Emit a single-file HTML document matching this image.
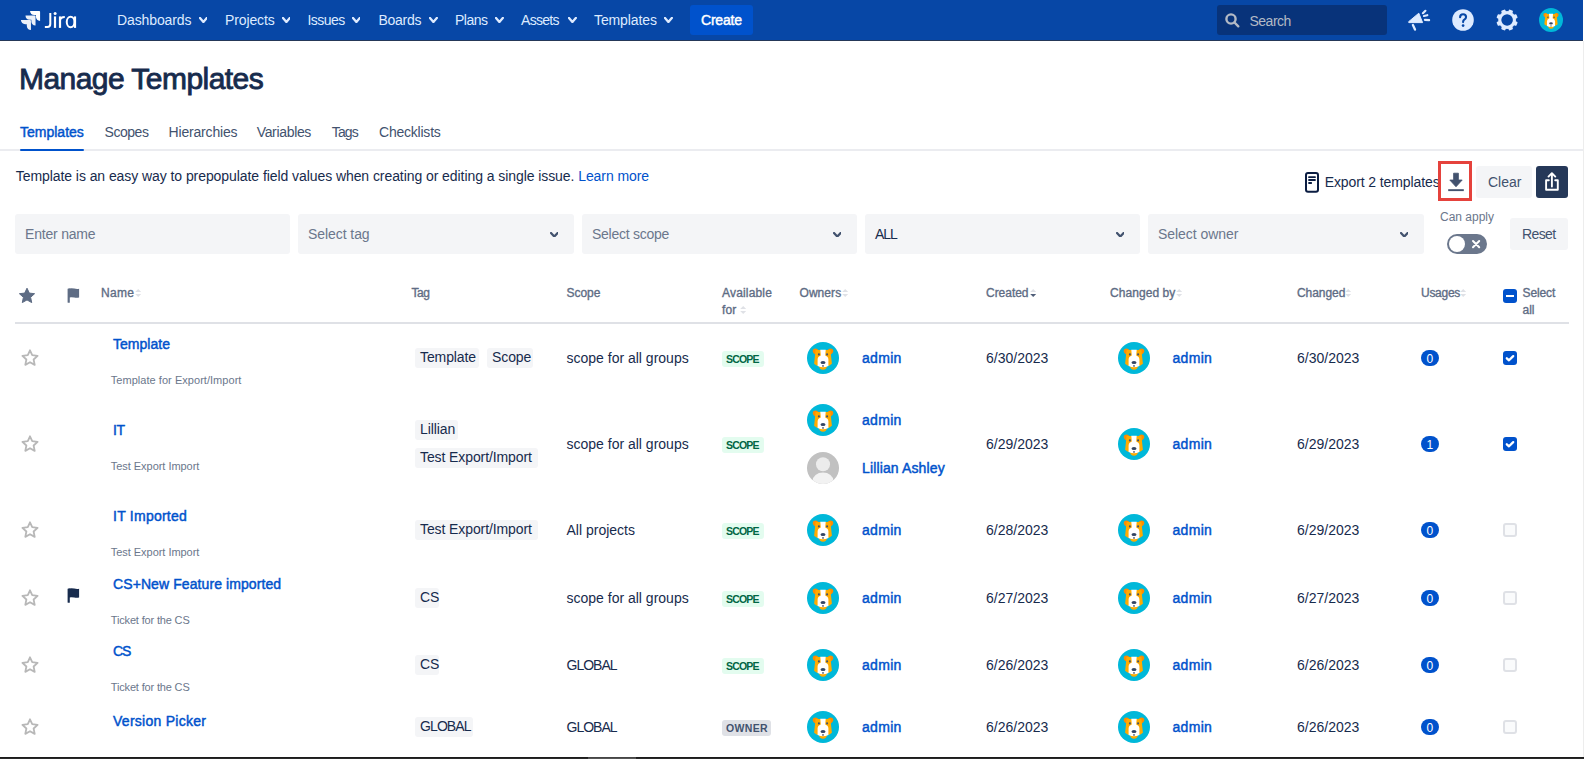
<!DOCTYPE html>
<html><head><meta charset="utf-8"><title>Manage Templates</title>
<style>
html,body{margin:0;padding:0;background:#fff;width:1584px;height:759px;overflow:hidden;position:relative}
body{font-family:"Liberation Sans",sans-serif;}
.t{position:absolute;white-space:nowrap;font-family:"Liberation Sans",sans-serif}
.r{position:absolute;display:block}
</style></head><body>
<div class="r" style="left:0px;top:0px;width:1583px;height:40px;background:#0747a6;"></div>
<div class="r" style="left:0px;top:40px;width:1583px;height:1px;background:#253858;"></div>
<svg class="r" style="left:19px;top:9px;" width="23" height="23" viewBox="0 0 24 24"><path fill="#fff" d="M11.53 2c0 2.4 1.97 4.35 4.35 4.35h1.78v1.7c0 2.4 1.94 4.34 4.34 4.35V2.84a.84.84 0 0 0-.84-.84H11.53z"/><path fill="#fff" opacity="0.92" d="M6.77 6.8a4.362 4.362 0 0 0 4.34 4.34h1.8v1.72a4.362 4.362 0 0 0 4.34 4.34V7.63a.841.841 0 0 0-.83-.83H6.77z"/><path fill="#fff" opacity="0.92" d="M2 11.6c0 2.4 1.95 4.34 4.35 4.34h1.78v1.72c.01 2.39 1.95 4.34 4.34 4.34v-9.57a.84.84 0 0 0-.84-.84L2 11.6z"/></svg>
<svg class="r" style="left:42px;top:8px;" width="38" height="24" viewBox="0 0 38 24"><g fill="none" stroke="#fff"><path d="M8.3 4.9 V15.9 Q8.3 18.95 5.3 18.95 H2.85" stroke-width="2"/><path d="M13 8.4 V19.9" stroke-width="2.2"/><path d="M18 8.4 V19.9" stroke-width="2.2"/><path d="M18 12.6 Q18.3 9.05 22.8 9.05" stroke-width="1.9"/><ellipse cx="28.6" cy="14.05" rx="3.85" ry="5.2" stroke-width="2"/><path d="M33 8.4 V19.9" stroke-width="2.2"/></g><circle cx="13.1" cy="5.5" r="1.5" fill="#fff"/></svg>
<div class="t" style="left:117px;top:13px;font-size:14px;line-height:14px;font-weight:400;color:#deebff;letter-spacing:-0.11px">Dashboards</div>
<svg class="r" style="left:198.5px;top:17px;" width="8.8" height="6" viewBox="0 0 8.8 6"><path d="M1 1 L4.4 5 L7.800000000000001 1" fill="none" stroke="#deebff" stroke-width="2.3" stroke-linecap="round" stroke-linejoin="round"/></svg>
<div class="t" style="left:225px;top:13px;font-size:14px;line-height:14px;font-weight:400;color:#deebff;letter-spacing:-0.13px">Projects</div>
<svg class="r" style="left:281.5px;top:17px;" width="8.8" height="6" viewBox="0 0 8.8 6"><path d="M1 1 L4.4 5 L7.800000000000001 1" fill="none" stroke="#deebff" stroke-width="2.3" stroke-linecap="round" stroke-linejoin="round"/></svg>
<div class="t" style="left:307.5px;top:13px;font-size:14px;line-height:14px;font-weight:400;color:#deebff;letter-spacing:-0.55px">Issues</div>
<svg class="r" style="left:351.5px;top:17px;" width="8.8" height="6" viewBox="0 0 8.8 6"><path d="M1 1 L4.4 5 L7.800000000000001 1" fill="none" stroke="#deebff" stroke-width="2.3" stroke-linecap="round" stroke-linejoin="round"/></svg>
<div class="t" style="left:378.5px;top:13px;font-size:14px;line-height:14px;font-weight:400;color:#deebff;letter-spacing:-0.28px">Boards</div>
<svg class="r" style="left:429px;top:17px;" width="8.8" height="6" viewBox="0 0 8.8 6"><path d="M1 1 L4.4 5 L7.800000000000001 1" fill="none" stroke="#deebff" stroke-width="2.3" stroke-linecap="round" stroke-linejoin="round"/></svg>
<div class="t" style="left:455px;top:13px;font-size:14px;line-height:14px;font-weight:400;color:#deebff;letter-spacing:-0.5px">Plans</div>
<svg class="r" style="left:495px;top:17px;" width="8.8" height="6" viewBox="0 0 8.8 6"><path d="M1 1 L4.4 5 L7.800000000000001 1" fill="none" stroke="#deebff" stroke-width="2.3" stroke-linecap="round" stroke-linejoin="round"/></svg>
<div class="t" style="left:521px;top:13px;font-size:14px;line-height:14px;font-weight:400;color:#deebff;letter-spacing:-0.7px">Assets</div>
<svg class="r" style="left:568px;top:17px;" width="8.8" height="6" viewBox="0 0 8.8 6"><path d="M1 1 L4.4 5 L7.800000000000001 1" fill="none" stroke="#deebff" stroke-width="2.3" stroke-linecap="round" stroke-linejoin="round"/></svg>
<div class="t" style="left:594px;top:13px;font-size:14px;line-height:14px;font-weight:400;color:#deebff;letter-spacing:-0.11px">Templates</div>
<svg class="r" style="left:664px;top:17px;" width="8.8" height="6" viewBox="0 0 8.8 6"><path d="M1 1 L4.4 5 L7.800000000000001 1" fill="none" stroke="#deebff" stroke-width="2.3" stroke-linecap="round" stroke-linejoin="round"/></svg>
<div class="r" style="left:690px;top:5px;width:63px;height:30px;background:#0052cc;border-radius:3px"></div>
<div class="t" style="left:701px;top:13px;font-size:14px;line-height:14px;font-weight:400;color:#ffffff;-webkit-text-stroke:0.45px #ffffff;letter-spacing:-0.2px">Create</div>
<div class="r" style="left:1217px;top:5px;width:170px;height:30px;background:#08337a;border-radius:3px"></div>
<svg class="r" style="left:1225px;top:13px;" width="15" height="15" viewBox="0 0 15 15"><circle cx="6" cy="6" r="4.6" fill="none" stroke="#b3bac5" stroke-width="2.4"/><path d="M9.5 9.5 L13.3 13.3" stroke="#b3bac5" stroke-width="2.4" stroke-linecap="round"/></svg>
<div class="t" style="left:1249.5px;top:14px;font-size:14px;line-height:14px;font-weight:400;color:#b3bac5;letter-spacing:-0.5px">Search</div>
<svg class="r" style="left:1406px;top:8px;" width="26" height="24" viewBox="0 0 26 24"><path d="M2.4 13.9 L12.8 5.2 L16.6 14.6 L2.9 14.6 Z" fill="#deebff" stroke="#deebff" stroke-width="1" stroke-linejoin="round"/><path d="M6.9 17 L9 21.6" stroke="#deebff" stroke-width="2.3" stroke-linecap="round"/><path d="M16.9 5.2 L19.4 2.8" stroke="#deebff" stroke-width="2.2" stroke-linecap="round"/><path d="M18 8 L21.3 7.2" stroke="#deebff" stroke-width="2.2" stroke-linecap="round"/><path d="M18.9 11.8 L23.1 12.2" stroke="#deebff" stroke-width="2.2" stroke-linecap="round"/></svg>
<svg class="r" style="left:1452px;top:9px;" width="22" height="22" viewBox="0 0 22 22"><circle cx="11" cy="11" r="10.8" fill="#deebff"/><path d="M8.1 8.3 Q8.1 5.2 11.1 5.2 Q14.05 5.2 14.05 8 Q14.05 9.7 12.3 10.7 Q11.1 11.4 11.1 13.1" fill="none" stroke="#0747a6" stroke-width="2.1" stroke-linecap="round"/><circle cx="11.1" cy="16.6" r="1.35" fill="#0747a6"/></svg>
<svg class="r" style="left:1496px;top:9px;" width="22" height="22" viewBox="0 0 22 22"><circle cx="11.1" cy="11" r="7.35" fill="none" stroke="#deebff" stroke-width="3.1"/><rect x="8.9" y="0.3" width="4.4" height="4.6" rx="1" fill="#deebff" transform="rotate(22.5 11.1 11)"/><rect x="8.9" y="0.3" width="4.4" height="4.6" rx="1" fill="#deebff" transform="rotate(67.5 11.1 11)"/><rect x="8.9" y="0.3" width="4.4" height="4.6" rx="1" fill="#deebff" transform="rotate(112.5 11.1 11)"/><rect x="8.9" y="0.3" width="4.4" height="4.6" rx="1" fill="#deebff" transform="rotate(157.5 11.1 11)"/><rect x="8.9" y="0.3" width="4.4" height="4.6" rx="1" fill="#deebff" transform="rotate(202.5 11.1 11)"/><rect x="8.9" y="0.3" width="4.4" height="4.6" rx="1" fill="#deebff" transform="rotate(247.5 11.1 11)"/><rect x="8.9" y="0.3" width="4.4" height="4.6" rx="1" fill="#deebff" transform="rotate(292.5 11.1 11)"/><rect x="8.9" y="0.3" width="4.4" height="4.6" rx="1" fill="#deebff" transform="rotate(337.5 11.1 11)"/></svg>
<svg class="r" style="left:1539px;top:8px;" width="24" height="24" viewBox="0 0 32 32"><circle cx="16" cy="16" r="16" fill="#00b8d9"/><path d="M5.8 9.3 Q5.6 6.6 8.6 6.6 Q10.6 6.8 11.4 8.2 L9.4 12.6 Q6.2 12.2 5.8 9.3Z" fill="#ff8b00"/><path d="M26.2 9.3 Q26.4 6.6 23.4 6.6 Q21.4 6.8 20.6 8.2 L22.6 12.6 Q25.8 12.2 26.2 9.3Z" fill="#ff8b00"/><path d="M8.6 8 L23.4 8 L24.9 21.8 Q22.5 23.9 19.9 24.3 Q19.6 27.6 16 27.8 Q12.4 27.6 12.1 24.3 Q9.5 23.9 7.1 21.8 Z" fill="#ffab00"/><path d="M13.3 7.7 L18.7 7.7 L18.2 13.5 Q21.4 14.6 21.4 17.5 L21.4 23.9 Q18.6 25.2 16 25.2 Q13.4 25.2 10.6 23.9 L10.6 17.5 Q10.6 14.6 13.8 13.5 Z" fill="#fff"/><circle cx="11.9" cy="12.4" r="1.05" fill="#42526e"/><circle cx="20.1" cy="12.4" r="1.05" fill="#42526e"/><ellipse cx="16" cy="20.6" rx="2.5" ry="1.5" fill="#344563"/><rect x="15" y="23.4" width="2" height="1.1" fill="#344563"/></svg>
<div class="t" style="left:19px;top:64px;font-size:30px;line-height:30px;font-weight:400;color:#172b4d;-webkit-text-stroke:0.85px #172b4d;letter-spacing:-0.55px">Manage Templates</div>
<div class="r" style="left:0px;top:149px;width:1583px;height:2px;background:#ebecf0;"></div>
<div class="t" style="left:20px;top:125px;font-size:14px;line-height:14px;font-weight:400;color:#0052cc;-webkit-text-stroke:0.45px #0052cc;letter-spacing:0px">Templates</div>
<div class="r" style="left:20px;top:149px;width:64px;height:2px;background:#0052cc;border-radius:1px"></div>
<div class="t" style="left:104.6px;top:125px;font-size:14px;line-height:14px;font-weight:400;color:#42526e;letter-spacing:-0.48px">Scopes</div>
<div class="t" style="left:168.5px;top:125px;font-size:14px;line-height:14px;font-weight:400;color:#42526e;letter-spacing:-0.17px">Hierarchies</div>
<div class="t" style="left:256.7px;top:125px;font-size:14px;line-height:14px;font-weight:400;color:#42526e;letter-spacing:-0.33px">Variables</div>
<div class="t" style="left:331.7px;top:125px;font-size:14px;line-height:14px;font-weight:400;color:#42526e;letter-spacing:-0.8px">Tags</div>
<div class="t" style="left:379px;top:125px;font-size:14px;line-height:14px;font-weight:400;color:#42526e;letter-spacing:-0.22px">Checklists</div>
<div class="t" style="left:15.8px;top:169px;font-size:14px;line-height:14px;font-weight:400;color:#172b4d;letter-spacing:-0.07px">Template is an easy way to prepopulate field values when creating or editing a single issue. <span style="color:#0052cc">Learn more</span></div>
<svg class="r" style="left:1304px;top:171px;" width="16" height="22" viewBox="0 0 16 22"><rect x="2" y="2" width="12" height="18.8" rx="2" fill="none" stroke="#0b1d42" stroke-width="2"/><rect x="4.2" y="5.2" width="7.6" height="1.8" rx="0.6" fill="#0b1d42"/><rect x="4.2" y="8.1" width="7.6" height="1.8" rx="0.6" fill="#0b1d42"/><rect x="4.2" y="11.1" width="3.8" height="1.8" rx="0.6" fill="#0b1d42"/></svg>
<div class="t" style="left:1324.7px;top:175px;font-size:14px;line-height:14px;font-weight:400;color:#172b4d;letter-spacing:-0.1px">Export 2 templates</div>
<div class="r" style="left:1438px;top:161px;width:28px;height:34px;border:3px solid #e5423c;"></div>
<svg class="r" style="left:1446px;top:171px;" width="20" height="22" viewBox="0 0 20 22"><path d="M7.6 2.2 L12.4 2.2 L12.4 9 L16.2 9 L10 15.8 L3.8 9 L7.6 9 Z" fill="#42526e" stroke="#42526e" stroke-width="0.8" stroke-linejoin="round"/><rect x="2.2" y="18.2" width="15.6" height="1.9" fill="#42526e"/></svg>
<div class="r" style="left:1476px;top:166px;width:56px;height:32px;background:#f4f5f7;border-radius:3px"></div>
<div class="t" style="left:1488px;top:175px;font-size:14px;line-height:14px;font-weight:400;color:#42526e;">Clear</div>
<div class="r" style="left:1536px;top:166px;width:32px;height:32px;background:#253858;border-radius:3px"></div>
<svg class="r" style="left:1541px;top:171px;" width="22" height="22" viewBox="0 0 22 22"><path d="M7.5 5.6 L10.9 2.2 L14.3 5.6 M10.9 2.6 L10.9 15.6" fill="none" stroke="#fff" stroke-width="1.9" stroke-linecap="round" stroke-linejoin="round"/><path d="M7.8 9.3 L5.1 9.3 L5.1 18.8 L16.8 18.8 L16.8 9.3 L14.2 9.3" fill="none" stroke="#fff" stroke-width="1.9" stroke-linejoin="round" stroke-linecap="round"/></svg>
<div class="r" style="left:15px;top:214px;width:275px;height:40px;background:#f4f5f7;border-radius:3px"></div>
<div class="t" style="left:25px;top:227px;font-size:14px;line-height:14px;font-weight:400;color:#6b778c;letter-spacing:-0.2px">Enter name</div>
<div class="r" style="left:298px;top:214px;width:276px;height:40px;background:#f4f5f7;border-radius:3px"></div>
<div class="t" style="left:308px;top:227px;font-size:14px;line-height:14px;font-weight:400;color:#6b778c;letter-spacing:-0.07px">Select tag</div>
<svg class="r" style="left:549.5px;top:231.5px;" width="8.6" height="5.6" viewBox="0 0 8.6 5.6"><path d="M1 1 L4.3 4.6 L7.6 1" fill="none" stroke="#42526e" stroke-width="2.2" stroke-linecap="round" stroke-linejoin="round"/></svg>
<div class="r" style="left:582px;top:214px;width:275px;height:40px;background:#f4f5f7;border-radius:3px"></div>
<div class="t" style="left:592px;top:227px;font-size:14px;line-height:14px;font-weight:400;color:#6b778c;letter-spacing:-0.25px">Select scope</div>
<svg class="r" style="left:832.5px;top:231.5px;" width="8.6" height="5.6" viewBox="0 0 8.6 5.6"><path d="M1 1 L4.3 4.6 L7.6 1" fill="none" stroke="#42526e" stroke-width="2.2" stroke-linecap="round" stroke-linejoin="round"/></svg>
<div class="r" style="left:865px;top:214px;width:275px;height:40px;background:#f4f5f7;border-radius:3px"></div>
<div class="t" style="left:875px;top:227px;font-size:14px;line-height:14px;font-weight:400;color:#172b4d;letter-spacing:-1px">ALL</div>
<svg class="r" style="left:1115.5px;top:231.5px;" width="8.6" height="5.6" viewBox="0 0 8.6 5.6"><path d="M1 1 L4.3 4.6 L7.6 1" fill="none" stroke="#42526e" stroke-width="2.2" stroke-linecap="round" stroke-linejoin="round"/></svg>
<div class="r" style="left:1148px;top:214px;width:276px;height:40px;background:#f4f5f7;border-radius:3px"></div>
<div class="t" style="left:1158px;top:227px;font-size:14px;line-height:14px;font-weight:400;color:#6b778c;letter-spacing:-0.05px">Select owner</div>
<svg class="r" style="left:1399.5px;top:231.5px;" width="8.6" height="5.6" viewBox="0 0 8.6 5.6"><path d="M1 1 L4.3 4.6 L7.6 1" fill="none" stroke="#42526e" stroke-width="2.2" stroke-linecap="round" stroke-linejoin="round"/></svg>
<div class="t" style="left:1440px;top:211px;font-size:12px;line-height:12px;font-weight:400;color:#6b778c;">Can apply</div>
<div class="r" style="left:1447px;top:234px;width:40px;height:20px;background:#6b778c;border-radius:10px"></div>
<div class="r" style="left:1449px;top:236px;width:16px;height:16px;border-radius:50%;background:#fff"></div>
<svg class="r" style="left:1470px;top:239px;" width="12" height="11" viewBox="0 0 12 11"><path d="M3 2 L9.2 8.2 M9.2 2 L3 8.2" stroke="#fff" stroke-width="2" stroke-linecap="round"/></svg>
<div class="r" style="left:1510px;top:218px;width:58px;height:32px;background:#f4f5f7;border-radius:3px"></div>
<div class="t" style="left:1522px;top:227px;font-size:14px;line-height:14px;font-weight:400;color:#42526e;letter-spacing:-0.6px">Reset</div>
<svg class="r" style="left:18px;top:287px;" width="18" height="18" viewBox="0 0 18 18"><path d="M9 1.2 L11.3 6.1 L16.6 6.7 L12.6 10.3 L13.7 15.6 L9 12.9 L4.3 15.6 L5.4 10.3 L1.4 6.7 L6.7 6.1 Z" fill="#5e6c84" stroke="#5e6c84" stroke-width="1" stroke-linejoin="round"/></svg>
<svg class="r" style="left:66px;top:287px;" width="16" height="18" viewBox="0 0 16 18"><rect x="1.6" y="1.5" width="2.2" height="14.3" rx="0.5" fill="#5e6c84"/><path d="M3 1.5 Q5.5 0.9 8.3 1.6 Q10.8 2.3 13.1 1.8 L13.1 10.4 Q10.8 11.2 8.3 10.6 Q5.5 9.9 3 10.5 Z" fill="#5e6c84"/></svg>
<div class="t" style="left:101px;top:287px;font-size:12px;line-height:12px;font-weight:400;color:#5e6c84;-webkit-text-stroke:0.35px #5e6c84;letter-spacing:0.27px">Name</div>
<svg class="r" style="left:134.8px;top:289px;" width="7" height="9" viewBox="0 0 7 9"><path d="M0.2 3 L3.2 0 L6.2 3 Z" fill="#dfe1e6"/><path d="M0.2 5 L3.2 8 L6.2 5 Z" fill="#dfe1e6"/></svg>
<div class="t" style="left:411.5px;top:287px;font-size:12px;line-height:12px;font-weight:400;color:#5e6c84;-webkit-text-stroke:0.35px #5e6c84;letter-spacing:-0.5px">Tag</div>
<div class="t" style="left:566.5px;top:287px;font-size:12px;line-height:12px;font-weight:400;color:#5e6c84;-webkit-text-stroke:0.35px #5e6c84;letter-spacing:-0.05px">Scope</div>
<div class="t" style="left:722px;top:287px;font-size:12px;line-height:12px;font-weight:400;color:#5e6c84;-webkit-text-stroke:0.35px #5e6c84;letter-spacing:0.17px">Available</div>
<div class="t" style="left:722px;top:304px;font-size:12px;line-height:12px;font-weight:400;color:#5e6c84;-webkit-text-stroke:0.35px #5e6c84;letter-spacing:0.1px">for</div>
<svg class="r" style="left:740px;top:306px;" width="7" height="9" viewBox="0 0 7 9"><path d="M0.2 3 L3.2 0 L6.2 3 Z" fill="#dfe1e6"/><path d="M0.2 5 L3.2 8 L6.2 5 Z" fill="#dfe1e6"/></svg>
<div class="t" style="left:799.5px;top:287px;font-size:12px;line-height:12px;font-weight:400;color:#5e6c84;-webkit-text-stroke:0.35px #5e6c84;letter-spacing:0.06px">Owners</div>
<svg class="r" style="left:842px;top:289px;" width="7" height="9" viewBox="0 0 7 9"><path d="M0.2 3 L3.2 0 L6.2 3 Z" fill="#dfe1e6"/><path d="M0.2 5 L3.2 8 L6.2 5 Z" fill="#dfe1e6"/></svg>
<div class="t" style="left:986px;top:287px;font-size:12px;line-height:12px;font-weight:400;color:#5e6c84;-webkit-text-stroke:0.35px #5e6c84;letter-spacing:-0.03px">Created</div>
<svg class="r" style="left:1029.8px;top:289px;" width="7" height="9" viewBox="0 0 7 9"><path d="M0.2 3 L3.2 0 L6.2 3 Z" fill="#dfe1e6"/><path d="M0.2 5 L3.2 8 L6.2 5 Z" fill="#505f79"/></svg>
<div class="t" style="left:1110px;top:287px;font-size:12px;line-height:12px;font-weight:400;color:#5e6c84;-webkit-text-stroke:0.35px #5e6c84;letter-spacing:0.06px">Changed by</div>
<svg class="r" style="left:1176px;top:289px;" width="7" height="9" viewBox="0 0 7 9"><path d="M0.2 3 L3.2 0 L6.2 3 Z" fill="#dfe1e6"/><path d="M0.2 5 L3.2 8 L6.2 5 Z" fill="#dfe1e6"/></svg>
<div class="t" style="left:1297px;top:287px;font-size:12px;line-height:12px;font-weight:400;color:#5e6c84;-webkit-text-stroke:0.35px #5e6c84;letter-spacing:-0.05px">Changed</div>
<svg class="r" style="left:1345px;top:289px;" width="7" height="9" viewBox="0 0 7 9"><path d="M0.2 3 L3.2 0 L6.2 3 Z" fill="#dfe1e6"/><path d="M0.2 5 L3.2 8 L6.2 5 Z" fill="#dfe1e6"/></svg>
<div class="t" style="left:1421px;top:287px;font-size:12px;line-height:12px;font-weight:400;color:#5e6c84;-webkit-text-stroke:0.35px #5e6c84;letter-spacing:-0.28px">Usages</div>
<svg class="r" style="left:1460px;top:289px;" width="7" height="9" viewBox="0 0 7 9"><path d="M0.2 3 L3.2 0 L6.2 3 Z" fill="#dfe1e6"/><path d="M0.2 5 L3.2 8 L6.2 5 Z" fill="#dfe1e6"/></svg>
<div class="r" style="left:1503px;top:289px;width:14px;height:14px;background:#0052cc;border-radius:3px"></div>
<div class="r" style="left:1506px;top:295px;width:8px;height:2px;background:#fff;"></div>
<div class="t" style="left:1522.5px;top:287px;font-size:12px;line-height:12px;font-weight:400;color:#5e6c84;-webkit-text-stroke:0.35px #5e6c84;letter-spacing:-0.12px">Select</div>
<div class="t" style="left:1522.5px;top:304px;font-size:12px;line-height:12px;font-weight:400;color:#5e6c84;-webkit-text-stroke:0.35px #5e6c84;letter-spacing:0px">all</div>
<div class="r" style="left:15px;top:322px;width:1554px;height:2px;background:#dfe1e6;"></div>
<svg class="r" style="left:21px;top:349px;" width="18" height="18" viewBox="0 0 18 18"><path d="M9 1.3 L11.2 6.2 L16.6 6.8 L12.6 10.5 L13.7 15.9 L9 13.2 L4.3 15.9 L5.4 10.5 L1.4 6.8 L6.8 6.2 Z" fill="none" stroke="#b8b8b8" stroke-width="1.8" stroke-linejoin="round"/></svg>
<div class="t" style="left:113px;top:337px;font-size:14px;line-height:14px;font-weight:400;color:#0052cc;-webkit-text-stroke:0.45px #0052cc;letter-spacing:0.03px">Template</div>
<div class="t" style="left:110.8px;top:375px;font-size:11px;line-height:11px;font-weight:400;color:#6b778c;letter-spacing:0.04px">Template for Export/Import</div>
<div class="r" style="left:415px;top:348px;width:64px;height:20px;background:#f4f5f7;border-radius:3px"></div>
<div class="t" style="left:420px;top:350px;font-size:14px;line-height:14px;font-weight:400;color:#172b4d;letter-spacing:-0.1px">Template</div>
<div class="r" style="left:487px;top:348px;width:46px;height:20px;background:#f4f5f7;border-radius:3px"></div>
<div class="t" style="left:492px;top:350px;font-size:14px;line-height:14px;font-weight:400;color:#172b4d;letter-spacing:-0.1px">Scope</div>
<div class="t" style="left:566.5px;top:351px;font-size:14px;line-height:14px;font-weight:400;color:#172b4d;">scope for all groups</div>
<div class="r" style="left:722px;top:351px;width:42px;height:16px;background:#e3fcef;border-radius:3px"></div>
<div class="t" style="left:726px;top:354px;font-size:10.5px;line-height:10.5px;font-weight:700;color:#006644;letter-spacing:-0.8px">SCOPE</div>
<svg class="r" style="left:807px;top:342px;" width="32" height="32" viewBox="0 0 32 32"><circle cx="16" cy="16" r="16" fill="#00b8d9"/><path d="M5.8 9.3 Q5.6 6.6 8.6 6.6 Q10.6 6.8 11.4 8.2 L9.4 12.6 Q6.2 12.2 5.8 9.3Z" fill="#ff8b00"/><path d="M26.2 9.3 Q26.4 6.6 23.4 6.6 Q21.4 6.8 20.6 8.2 L22.6 12.6 Q25.8 12.2 26.2 9.3Z" fill="#ff8b00"/><path d="M8.6 8 L23.4 8 L24.9 21.8 Q22.5 23.9 19.9 24.3 Q19.6 27.6 16 27.8 Q12.4 27.6 12.1 24.3 Q9.5 23.9 7.1 21.8 Z" fill="#ffab00"/><path d="M13.3 7.7 L18.7 7.7 L18.2 13.5 Q21.4 14.6 21.4 17.5 L21.4 23.9 Q18.6 25.2 16 25.2 Q13.4 25.2 10.6 23.9 L10.6 17.5 Q10.6 14.6 13.8 13.5 Z" fill="#fff"/><circle cx="11.9" cy="12.4" r="1.05" fill="#42526e"/><circle cx="20.1" cy="12.4" r="1.05" fill="#42526e"/><ellipse cx="16" cy="20.6" rx="2.5" ry="1.5" fill="#344563"/><rect x="15" y="23.4" width="2" height="1.1" fill="#344563"/></svg>
<div class="t" style="left:862px;top:351px;font-size:14px;line-height:14px;font-weight:400;color:#0052cc;-webkit-text-stroke:0.45px #0052cc;letter-spacing:0.3px">admin</div>
<div class="t" style="left:986px;top:351px;font-size:14px;line-height:14px;font-weight:400;color:#172b4d;letter-spacing:0px">6/30/2023</div>
<svg class="r" style="left:1118px;top:342px;" width="32" height="32" viewBox="0 0 32 32"><circle cx="16" cy="16" r="16" fill="#00b8d9"/><path d="M5.8 9.3 Q5.6 6.6 8.6 6.6 Q10.6 6.8 11.4 8.2 L9.4 12.6 Q6.2 12.2 5.8 9.3Z" fill="#ff8b00"/><path d="M26.2 9.3 Q26.4 6.6 23.4 6.6 Q21.4 6.8 20.6 8.2 L22.6 12.6 Q25.8 12.2 26.2 9.3Z" fill="#ff8b00"/><path d="M8.6 8 L23.4 8 L24.9 21.8 Q22.5 23.9 19.9 24.3 Q19.6 27.6 16 27.8 Q12.4 27.6 12.1 24.3 Q9.5 23.9 7.1 21.8 Z" fill="#ffab00"/><path d="M13.3 7.7 L18.7 7.7 L18.2 13.5 Q21.4 14.6 21.4 17.5 L21.4 23.9 Q18.6 25.2 16 25.2 Q13.4 25.2 10.6 23.9 L10.6 17.5 Q10.6 14.6 13.8 13.5 Z" fill="#fff"/><circle cx="11.9" cy="12.4" r="1.05" fill="#42526e"/><circle cx="20.1" cy="12.4" r="1.05" fill="#42526e"/><ellipse cx="16" cy="20.6" rx="2.5" ry="1.5" fill="#344563"/><rect x="15" y="23.4" width="2" height="1.1" fill="#344563"/></svg>
<div class="t" style="left:1172.5px;top:351px;font-size:14px;line-height:14px;font-weight:400;color:#0052cc;-webkit-text-stroke:0.45px #0052cc;letter-spacing:0.3px">admin</div>
<div class="t" style="left:1297px;top:351px;font-size:14px;line-height:14px;font-weight:400;color:#172b4d;letter-spacing:0px">6/30/2023</div>
<div class="r" style="left:1421px;top:350px;width:18px;height:16px;background:#0052cc;border-radius:8px"></div>
<div class="t" style="left:1426.5px;top:352.5px;font-size:12px;line-height:12px;font-weight:400;color:#fff;">0</div>
<div class="r" style="left:1503px;top:351px;width:14px;height:14px;background:#0052cc;border-radius:3px"></div>
<svg class="r" style="left:1503px;top:351px;" width="14" height="14" viewBox="0 0 14 14"><path d="M3.8 7.3 L6 9.3 L10.2 5.1" fill="none" stroke="#fff" stroke-width="2.3" stroke-linecap="round" stroke-linejoin="round"/></svg>
<svg class="r" style="left:21px;top:435px;" width="18" height="18" viewBox="0 0 18 18"><path d="M9 1.3 L11.2 6.2 L16.6 6.8 L12.6 10.5 L13.7 15.9 L9 13.2 L4.3 15.9 L5.4 10.5 L1.4 6.8 L6.8 6.2 Z" fill="none" stroke="#b8b8b8" stroke-width="1.8" stroke-linejoin="round"/></svg>
<div class="t" style="left:113px;top:423px;font-size:14px;line-height:14px;font-weight:400;color:#0052cc;-webkit-text-stroke:0.45px #0052cc;letter-spacing:-0.5px">IT</div>
<div class="t" style="left:110.8px;top:461px;font-size:11px;line-height:11px;font-weight:400;color:#6b778c;letter-spacing:-0.04px">Test Export Import</div>
<div class="r" style="left:415px;top:420px;width:43px;height:20px;background:#f4f5f7;border-radius:3px"></div>
<div class="t" style="left:420px;top:422px;font-size:14px;line-height:14px;font-weight:400;color:#172b4d;letter-spacing:-0.1px">Lillian</div>
<div class="r" style="left:415px;top:448px;width:123px;height:20px;background:#f4f5f7;border-radius:3px"></div>
<div class="t" style="left:420px;top:450px;font-size:14px;line-height:14px;font-weight:400;color:#172b4d;letter-spacing:-0.1px">Test Export/Import</div>
<div class="t" style="left:566.5px;top:437px;font-size:14px;line-height:14px;font-weight:400;color:#172b4d;">scope for all groups</div>
<div class="r" style="left:722px;top:437px;width:42px;height:16px;background:#e3fcef;border-radius:3px"></div>
<div class="t" style="left:726px;top:440px;font-size:10.5px;line-height:10.5px;font-weight:700;color:#006644;letter-spacing:-0.8px">SCOPE</div>
<svg class="r" style="left:807px;top:404px;" width="32" height="32" viewBox="0 0 32 32"><circle cx="16" cy="16" r="16" fill="#00b8d9"/><path d="M5.8 9.3 Q5.6 6.6 8.6 6.6 Q10.6 6.8 11.4 8.2 L9.4 12.6 Q6.2 12.2 5.8 9.3Z" fill="#ff8b00"/><path d="M26.2 9.3 Q26.4 6.6 23.4 6.6 Q21.4 6.8 20.6 8.2 L22.6 12.6 Q25.8 12.2 26.2 9.3Z" fill="#ff8b00"/><path d="M8.6 8 L23.4 8 L24.9 21.8 Q22.5 23.9 19.9 24.3 Q19.6 27.6 16 27.8 Q12.4 27.6 12.1 24.3 Q9.5 23.9 7.1 21.8 Z" fill="#ffab00"/><path d="M13.3 7.7 L18.7 7.7 L18.2 13.5 Q21.4 14.6 21.4 17.5 L21.4 23.9 Q18.6 25.2 16 25.2 Q13.4 25.2 10.6 23.9 L10.6 17.5 Q10.6 14.6 13.8 13.5 Z" fill="#fff"/><circle cx="11.9" cy="12.4" r="1.05" fill="#42526e"/><circle cx="20.1" cy="12.4" r="1.05" fill="#42526e"/><ellipse cx="16" cy="20.6" rx="2.5" ry="1.5" fill="#344563"/><rect x="15" y="23.4" width="2" height="1.1" fill="#344563"/></svg>
<div class="t" style="left:862px;top:413px;font-size:14px;line-height:14px;font-weight:400;color:#0052cc;-webkit-text-stroke:0.45px #0052cc;letter-spacing:0.3px">admin</div>
<svg class="r" style="left:807px;top:452px;" width="32" height="32" viewBox="0 0 32 32"><defs><clipPath id="pc"><circle cx="16" cy="16" r="16"/></clipPath></defs><circle cx="16" cy="16" r="16" fill="#c1c1c1"/><g clip-path="url(#pc)"><circle cx="16" cy="12.3" r="7" fill="#ececec"/><ellipse cx="16" cy="29" rx="10.5" ry="8.5" fill="#f2f2f2"/></g></svg>
<div class="t" style="left:862px;top:461px;font-size:14px;line-height:14px;font-weight:400;color:#0052cc;-webkit-text-stroke:0.45px #0052cc;letter-spacing:0.13px">Lillian Ashley</div>
<div class="t" style="left:986px;top:437px;font-size:14px;line-height:14px;font-weight:400;color:#172b4d;letter-spacing:0px">6/29/2023</div>
<svg class="r" style="left:1118px;top:428px;" width="32" height="32" viewBox="0 0 32 32"><circle cx="16" cy="16" r="16" fill="#00b8d9"/><path d="M5.8 9.3 Q5.6 6.6 8.6 6.6 Q10.6 6.8 11.4 8.2 L9.4 12.6 Q6.2 12.2 5.8 9.3Z" fill="#ff8b00"/><path d="M26.2 9.3 Q26.4 6.6 23.4 6.6 Q21.4 6.8 20.6 8.2 L22.6 12.6 Q25.8 12.2 26.2 9.3Z" fill="#ff8b00"/><path d="M8.6 8 L23.4 8 L24.9 21.8 Q22.5 23.9 19.9 24.3 Q19.6 27.6 16 27.8 Q12.4 27.6 12.1 24.3 Q9.5 23.9 7.1 21.8 Z" fill="#ffab00"/><path d="M13.3 7.7 L18.7 7.7 L18.2 13.5 Q21.4 14.6 21.4 17.5 L21.4 23.9 Q18.6 25.2 16 25.2 Q13.4 25.2 10.6 23.9 L10.6 17.5 Q10.6 14.6 13.8 13.5 Z" fill="#fff"/><circle cx="11.9" cy="12.4" r="1.05" fill="#42526e"/><circle cx="20.1" cy="12.4" r="1.05" fill="#42526e"/><ellipse cx="16" cy="20.6" rx="2.5" ry="1.5" fill="#344563"/><rect x="15" y="23.4" width="2" height="1.1" fill="#344563"/></svg>
<div class="t" style="left:1172.5px;top:437px;font-size:14px;line-height:14px;font-weight:400;color:#0052cc;-webkit-text-stroke:0.45px #0052cc;letter-spacing:0.3px">admin</div>
<div class="t" style="left:1297px;top:437px;font-size:14px;line-height:14px;font-weight:400;color:#172b4d;letter-spacing:0px">6/29/2023</div>
<div class="r" style="left:1421px;top:436px;width:18px;height:16px;background:#0052cc;border-radius:8px"></div>
<div class="t" style="left:1426.5px;top:438.5px;font-size:12px;line-height:12px;font-weight:400;color:#fff;">1</div>
<div class="r" style="left:1503px;top:437px;width:14px;height:14px;background:#0052cc;border-radius:3px"></div>
<svg class="r" style="left:1503px;top:437px;" width="14" height="14" viewBox="0 0 14 14"><path d="M3.8 7.3 L6 9.3 L10.2 5.1" fill="none" stroke="#fff" stroke-width="2.3" stroke-linecap="round" stroke-linejoin="round"/></svg>
<svg class="r" style="left:21px;top:521px;" width="18" height="18" viewBox="0 0 18 18"><path d="M9 1.3 L11.2 6.2 L16.6 6.8 L12.6 10.5 L13.7 15.9 L9 13.2 L4.3 15.9 L5.4 10.5 L1.4 6.8 L6.8 6.2 Z" fill="none" stroke="#b8b8b8" stroke-width="1.8" stroke-linejoin="round"/></svg>
<div class="t" style="left:113px;top:509px;font-size:14px;line-height:14px;font-weight:400;color:#0052cc;-webkit-text-stroke:0.45px #0052cc;letter-spacing:0.25px">IT Imported</div>
<div class="t" style="left:110.8px;top:547px;font-size:11px;line-height:11px;font-weight:400;color:#6b778c;letter-spacing:-0.04px">Test Export Import</div>
<div class="r" style="left:415px;top:520px;width:123px;height:20px;background:#f4f5f7;border-radius:3px"></div>
<div class="t" style="left:420px;top:522px;font-size:14px;line-height:14px;font-weight:400;color:#172b4d;letter-spacing:-0.1px">Test Export/Import</div>
<div class="t" style="left:566.5px;top:523px;font-size:14px;line-height:14px;font-weight:400;color:#172b4d;">All projects</div>
<div class="r" style="left:722px;top:523px;width:42px;height:16px;background:#e3fcef;border-radius:3px"></div>
<div class="t" style="left:726px;top:526px;font-size:10.5px;line-height:10.5px;font-weight:700;color:#006644;letter-spacing:-0.8px">SCOPE</div>
<svg class="r" style="left:807px;top:514px;" width="32" height="32" viewBox="0 0 32 32"><circle cx="16" cy="16" r="16" fill="#00b8d9"/><path d="M5.8 9.3 Q5.6 6.6 8.6 6.6 Q10.6 6.8 11.4 8.2 L9.4 12.6 Q6.2 12.2 5.8 9.3Z" fill="#ff8b00"/><path d="M26.2 9.3 Q26.4 6.6 23.4 6.6 Q21.4 6.8 20.6 8.2 L22.6 12.6 Q25.8 12.2 26.2 9.3Z" fill="#ff8b00"/><path d="M8.6 8 L23.4 8 L24.9 21.8 Q22.5 23.9 19.9 24.3 Q19.6 27.6 16 27.8 Q12.4 27.6 12.1 24.3 Q9.5 23.9 7.1 21.8 Z" fill="#ffab00"/><path d="M13.3 7.7 L18.7 7.7 L18.2 13.5 Q21.4 14.6 21.4 17.5 L21.4 23.9 Q18.6 25.2 16 25.2 Q13.4 25.2 10.6 23.9 L10.6 17.5 Q10.6 14.6 13.8 13.5 Z" fill="#fff"/><circle cx="11.9" cy="12.4" r="1.05" fill="#42526e"/><circle cx="20.1" cy="12.4" r="1.05" fill="#42526e"/><ellipse cx="16" cy="20.6" rx="2.5" ry="1.5" fill="#344563"/><rect x="15" y="23.4" width="2" height="1.1" fill="#344563"/></svg>
<div class="t" style="left:862px;top:523px;font-size:14px;line-height:14px;font-weight:400;color:#0052cc;-webkit-text-stroke:0.45px #0052cc;letter-spacing:0.3px">admin</div>
<div class="t" style="left:986px;top:523px;font-size:14px;line-height:14px;font-weight:400;color:#172b4d;letter-spacing:0px">6/28/2023</div>
<svg class="r" style="left:1118px;top:514px;" width="32" height="32" viewBox="0 0 32 32"><circle cx="16" cy="16" r="16" fill="#00b8d9"/><path d="M5.8 9.3 Q5.6 6.6 8.6 6.6 Q10.6 6.8 11.4 8.2 L9.4 12.6 Q6.2 12.2 5.8 9.3Z" fill="#ff8b00"/><path d="M26.2 9.3 Q26.4 6.6 23.4 6.6 Q21.4 6.8 20.6 8.2 L22.6 12.6 Q25.8 12.2 26.2 9.3Z" fill="#ff8b00"/><path d="M8.6 8 L23.4 8 L24.9 21.8 Q22.5 23.9 19.9 24.3 Q19.6 27.6 16 27.8 Q12.4 27.6 12.1 24.3 Q9.5 23.9 7.1 21.8 Z" fill="#ffab00"/><path d="M13.3 7.7 L18.7 7.7 L18.2 13.5 Q21.4 14.6 21.4 17.5 L21.4 23.9 Q18.6 25.2 16 25.2 Q13.4 25.2 10.6 23.9 L10.6 17.5 Q10.6 14.6 13.8 13.5 Z" fill="#fff"/><circle cx="11.9" cy="12.4" r="1.05" fill="#42526e"/><circle cx="20.1" cy="12.4" r="1.05" fill="#42526e"/><ellipse cx="16" cy="20.6" rx="2.5" ry="1.5" fill="#344563"/><rect x="15" y="23.4" width="2" height="1.1" fill="#344563"/></svg>
<div class="t" style="left:1172.5px;top:523px;font-size:14px;line-height:14px;font-weight:400;color:#0052cc;-webkit-text-stroke:0.45px #0052cc;letter-spacing:0.3px">admin</div>
<div class="t" style="left:1297px;top:523px;font-size:14px;line-height:14px;font-weight:400;color:#172b4d;letter-spacing:0px">6/29/2023</div>
<div class="r" style="left:1421px;top:522px;width:18px;height:16px;background:#0052cc;border-radius:8px"></div>
<div class="t" style="left:1426.5px;top:524.5px;font-size:12px;line-height:12px;font-weight:400;color:#fff;">0</div>
<div class="r" style="left:1503px;top:523px;width:10px;height:10px;border:2px solid #dfe1e6;border-radius:3px;background:#fafbfc"></div>
<svg class="r" style="left:21px;top:589px;" width="18" height="18" viewBox="0 0 18 18"><path d="M9 1.3 L11.2 6.2 L16.6 6.8 L12.6 10.5 L13.7 15.9 L9 13.2 L4.3 15.9 L5.4 10.5 L1.4 6.8 L6.8 6.2 Z" fill="none" stroke="#b8b8b8" stroke-width="1.8" stroke-linejoin="round"/></svg>
<svg class="r" style="left:66px;top:587px;" width="16" height="18" viewBox="0 0 16 18"><rect x="1.6" y="1.5" width="2.2" height="14.3" rx="0.5" fill="#172b4d"/><path d="M3 1.5 Q5.5 0.9 8.3 1.6 Q10.8 2.3 13.1 1.8 L13.1 10.4 Q10.8 11.2 8.3 10.6 Q5.5 9.9 3 10.5 Z" fill="#172b4d"/></svg>
<div class="t" style="left:113px;top:577px;font-size:14px;line-height:14px;font-weight:400;color:#0052cc;-webkit-text-stroke:0.45px #0052cc;letter-spacing:0.09px">CS+New Feature imported</div>
<div class="t" style="left:110.8px;top:615px;font-size:11px;line-height:11px;font-weight:400;color:#6b778c;letter-spacing:-0.16px">Ticket for the CS</div>
<div class="r" style="left:415px;top:588px;width:24px;height:20px;background:#f4f5f7;border-radius:3px"></div>
<div class="t" style="left:420px;top:590px;font-size:14px;line-height:14px;font-weight:400;color:#172b4d;letter-spacing:-0.1px">CS</div>
<div class="t" style="left:566.5px;top:591px;font-size:14px;line-height:14px;font-weight:400;color:#172b4d;">scope for all groups</div>
<div class="r" style="left:722px;top:591px;width:42px;height:16px;background:#e3fcef;border-radius:3px"></div>
<div class="t" style="left:726px;top:594px;font-size:10.5px;line-height:10.5px;font-weight:700;color:#006644;letter-spacing:-0.8px">SCOPE</div>
<svg class="r" style="left:807px;top:582px;" width="32" height="32" viewBox="0 0 32 32"><circle cx="16" cy="16" r="16" fill="#00b8d9"/><path d="M5.8 9.3 Q5.6 6.6 8.6 6.6 Q10.6 6.8 11.4 8.2 L9.4 12.6 Q6.2 12.2 5.8 9.3Z" fill="#ff8b00"/><path d="M26.2 9.3 Q26.4 6.6 23.4 6.6 Q21.4 6.8 20.6 8.2 L22.6 12.6 Q25.8 12.2 26.2 9.3Z" fill="#ff8b00"/><path d="M8.6 8 L23.4 8 L24.9 21.8 Q22.5 23.9 19.9 24.3 Q19.6 27.6 16 27.8 Q12.4 27.6 12.1 24.3 Q9.5 23.9 7.1 21.8 Z" fill="#ffab00"/><path d="M13.3 7.7 L18.7 7.7 L18.2 13.5 Q21.4 14.6 21.4 17.5 L21.4 23.9 Q18.6 25.2 16 25.2 Q13.4 25.2 10.6 23.9 L10.6 17.5 Q10.6 14.6 13.8 13.5 Z" fill="#fff"/><circle cx="11.9" cy="12.4" r="1.05" fill="#42526e"/><circle cx="20.1" cy="12.4" r="1.05" fill="#42526e"/><ellipse cx="16" cy="20.6" rx="2.5" ry="1.5" fill="#344563"/><rect x="15" y="23.4" width="2" height="1.1" fill="#344563"/></svg>
<div class="t" style="left:862px;top:591px;font-size:14px;line-height:14px;font-weight:400;color:#0052cc;-webkit-text-stroke:0.45px #0052cc;letter-spacing:0.3px">admin</div>
<div class="t" style="left:986px;top:591px;font-size:14px;line-height:14px;font-weight:400;color:#172b4d;letter-spacing:0px">6/27/2023</div>
<svg class="r" style="left:1118px;top:582px;" width="32" height="32" viewBox="0 0 32 32"><circle cx="16" cy="16" r="16" fill="#00b8d9"/><path d="M5.8 9.3 Q5.6 6.6 8.6 6.6 Q10.6 6.8 11.4 8.2 L9.4 12.6 Q6.2 12.2 5.8 9.3Z" fill="#ff8b00"/><path d="M26.2 9.3 Q26.4 6.6 23.4 6.6 Q21.4 6.8 20.6 8.2 L22.6 12.6 Q25.8 12.2 26.2 9.3Z" fill="#ff8b00"/><path d="M8.6 8 L23.4 8 L24.9 21.8 Q22.5 23.9 19.9 24.3 Q19.6 27.6 16 27.8 Q12.4 27.6 12.1 24.3 Q9.5 23.9 7.1 21.8 Z" fill="#ffab00"/><path d="M13.3 7.7 L18.7 7.7 L18.2 13.5 Q21.4 14.6 21.4 17.5 L21.4 23.9 Q18.6 25.2 16 25.2 Q13.4 25.2 10.6 23.9 L10.6 17.5 Q10.6 14.6 13.8 13.5 Z" fill="#fff"/><circle cx="11.9" cy="12.4" r="1.05" fill="#42526e"/><circle cx="20.1" cy="12.4" r="1.05" fill="#42526e"/><ellipse cx="16" cy="20.6" rx="2.5" ry="1.5" fill="#344563"/><rect x="15" y="23.4" width="2" height="1.1" fill="#344563"/></svg>
<div class="t" style="left:1172.5px;top:591px;font-size:14px;line-height:14px;font-weight:400;color:#0052cc;-webkit-text-stroke:0.45px #0052cc;letter-spacing:0.3px">admin</div>
<div class="t" style="left:1297px;top:591px;font-size:14px;line-height:14px;font-weight:400;color:#172b4d;letter-spacing:0px">6/27/2023</div>
<div class="r" style="left:1421px;top:590px;width:18px;height:16px;background:#0052cc;border-radius:8px"></div>
<div class="t" style="left:1426.5px;top:592.5px;font-size:12px;line-height:12px;font-weight:400;color:#fff;">0</div>
<div class="r" style="left:1503px;top:591px;width:10px;height:10px;border:2px solid #dfe1e6;border-radius:3px;background:#fafbfc"></div>
<svg class="r" style="left:21px;top:656px;" width="18" height="18" viewBox="0 0 18 18"><path d="M9 1.3 L11.2 6.2 L16.6 6.8 L12.6 10.5 L13.7 15.9 L9 13.2 L4.3 15.9 L5.4 10.5 L1.4 6.8 L6.8 6.2 Z" fill="none" stroke="#b8b8b8" stroke-width="1.8" stroke-linejoin="round"/></svg>
<div class="t" style="left:113px;top:644px;font-size:14px;line-height:14px;font-weight:400;color:#0052cc;-webkit-text-stroke:0.45px #0052cc;letter-spacing:-1.0px">CS</div>
<div class="t" style="left:110.8px;top:682px;font-size:11px;line-height:11px;font-weight:400;color:#6b778c;letter-spacing:-0.16px">Ticket for the CS</div>
<div class="r" style="left:415px;top:655px;width:24px;height:20px;background:#f4f5f7;border-radius:3px"></div>
<div class="t" style="left:420px;top:657px;font-size:14px;line-height:14px;font-weight:400;color:#172b4d;letter-spacing:-0.1px">CS</div>
<div class="t" style="left:566.5px;top:658px;font-size:14px;line-height:14px;font-weight:400;color:#172b4d;letter-spacing:-1px">GLOBAL</div>
<div class="r" style="left:722px;top:658px;width:42px;height:16px;background:#e3fcef;border-radius:3px"></div>
<div class="t" style="left:726px;top:661px;font-size:10.5px;line-height:10.5px;font-weight:700;color:#006644;letter-spacing:-0.8px">SCOPE</div>
<svg class="r" style="left:807px;top:649px;" width="32" height="32" viewBox="0 0 32 32"><circle cx="16" cy="16" r="16" fill="#00b8d9"/><path d="M5.8 9.3 Q5.6 6.6 8.6 6.6 Q10.6 6.8 11.4 8.2 L9.4 12.6 Q6.2 12.2 5.8 9.3Z" fill="#ff8b00"/><path d="M26.2 9.3 Q26.4 6.6 23.4 6.6 Q21.4 6.8 20.6 8.2 L22.6 12.6 Q25.8 12.2 26.2 9.3Z" fill="#ff8b00"/><path d="M8.6 8 L23.4 8 L24.9 21.8 Q22.5 23.9 19.9 24.3 Q19.6 27.6 16 27.8 Q12.4 27.6 12.1 24.3 Q9.5 23.9 7.1 21.8 Z" fill="#ffab00"/><path d="M13.3 7.7 L18.7 7.7 L18.2 13.5 Q21.4 14.6 21.4 17.5 L21.4 23.9 Q18.6 25.2 16 25.2 Q13.4 25.2 10.6 23.9 L10.6 17.5 Q10.6 14.6 13.8 13.5 Z" fill="#fff"/><circle cx="11.9" cy="12.4" r="1.05" fill="#42526e"/><circle cx="20.1" cy="12.4" r="1.05" fill="#42526e"/><ellipse cx="16" cy="20.6" rx="2.5" ry="1.5" fill="#344563"/><rect x="15" y="23.4" width="2" height="1.1" fill="#344563"/></svg>
<div class="t" style="left:862px;top:658px;font-size:14px;line-height:14px;font-weight:400;color:#0052cc;-webkit-text-stroke:0.45px #0052cc;letter-spacing:0.3px">admin</div>
<div class="t" style="left:986px;top:658px;font-size:14px;line-height:14px;font-weight:400;color:#172b4d;letter-spacing:0px">6/26/2023</div>
<svg class="r" style="left:1118px;top:649px;" width="32" height="32" viewBox="0 0 32 32"><circle cx="16" cy="16" r="16" fill="#00b8d9"/><path d="M5.8 9.3 Q5.6 6.6 8.6 6.6 Q10.6 6.8 11.4 8.2 L9.4 12.6 Q6.2 12.2 5.8 9.3Z" fill="#ff8b00"/><path d="M26.2 9.3 Q26.4 6.6 23.4 6.6 Q21.4 6.8 20.6 8.2 L22.6 12.6 Q25.8 12.2 26.2 9.3Z" fill="#ff8b00"/><path d="M8.6 8 L23.4 8 L24.9 21.8 Q22.5 23.9 19.9 24.3 Q19.6 27.6 16 27.8 Q12.4 27.6 12.1 24.3 Q9.5 23.9 7.1 21.8 Z" fill="#ffab00"/><path d="M13.3 7.7 L18.7 7.7 L18.2 13.5 Q21.4 14.6 21.4 17.5 L21.4 23.9 Q18.6 25.2 16 25.2 Q13.4 25.2 10.6 23.9 L10.6 17.5 Q10.6 14.6 13.8 13.5 Z" fill="#fff"/><circle cx="11.9" cy="12.4" r="1.05" fill="#42526e"/><circle cx="20.1" cy="12.4" r="1.05" fill="#42526e"/><ellipse cx="16" cy="20.6" rx="2.5" ry="1.5" fill="#344563"/><rect x="15" y="23.4" width="2" height="1.1" fill="#344563"/></svg>
<div class="t" style="left:1172.5px;top:658px;font-size:14px;line-height:14px;font-weight:400;color:#0052cc;-webkit-text-stroke:0.45px #0052cc;letter-spacing:0.3px">admin</div>
<div class="t" style="left:1297px;top:658px;font-size:14px;line-height:14px;font-weight:400;color:#172b4d;letter-spacing:0px">6/26/2023</div>
<div class="r" style="left:1421px;top:657px;width:18px;height:16px;background:#0052cc;border-radius:8px"></div>
<div class="t" style="left:1426.5px;top:659.5px;font-size:12px;line-height:12px;font-weight:400;color:#fff;">0</div>
<div class="r" style="left:1503px;top:658px;width:10px;height:10px;border:2px solid #dfe1e6;border-radius:3px;background:#fafbfc"></div>
<svg class="r" style="left:21px;top:718px;" width="18" height="18" viewBox="0 0 18 18"><path d="M9 1.3 L11.2 6.2 L16.6 6.8 L12.6 10.5 L13.7 15.9 L9 13.2 L4.3 15.9 L5.4 10.5 L1.4 6.8 L6.8 6.2 Z" fill="none" stroke="#b8b8b8" stroke-width="1.8" stroke-linejoin="round"/></svg>
<div class="t" style="left:113px;top:714px;font-size:14px;line-height:14px;font-weight:400;color:#0052cc;-webkit-text-stroke:0.45px #0052cc;letter-spacing:0.27px">Version Picker</div>
<div class="r" style="left:415px;top:717px;width:58px;height:20px;background:#f4f5f7;border-radius:3px"></div>
<div class="t" style="left:420px;top:719px;font-size:14px;line-height:14px;font-weight:400;color:#172b4d;letter-spacing:-0.9px">GLOBAL</div>
<div class="t" style="left:566.5px;top:720px;font-size:14px;line-height:14px;font-weight:400;color:#172b4d;letter-spacing:-1px">GLOBAL</div>
<div class="r" style="left:722px;top:720px;width:49px;height:16px;background:#dfe1e6;border-radius:3px"></div>
<div class="t" style="left:726px;top:723px;font-size:10.5px;line-height:10.5px;font-weight:700;color:#42526e;letter-spacing:0.35px">OWNER</div>
<svg class="r" style="left:807px;top:711px;" width="32" height="32" viewBox="0 0 32 32"><circle cx="16" cy="16" r="16" fill="#00b8d9"/><path d="M5.8 9.3 Q5.6 6.6 8.6 6.6 Q10.6 6.8 11.4 8.2 L9.4 12.6 Q6.2 12.2 5.8 9.3Z" fill="#ff8b00"/><path d="M26.2 9.3 Q26.4 6.6 23.4 6.6 Q21.4 6.8 20.6 8.2 L22.6 12.6 Q25.8 12.2 26.2 9.3Z" fill="#ff8b00"/><path d="M8.6 8 L23.4 8 L24.9 21.8 Q22.5 23.9 19.9 24.3 Q19.6 27.6 16 27.8 Q12.4 27.6 12.1 24.3 Q9.5 23.9 7.1 21.8 Z" fill="#ffab00"/><path d="M13.3 7.7 L18.7 7.7 L18.2 13.5 Q21.4 14.6 21.4 17.5 L21.4 23.9 Q18.6 25.2 16 25.2 Q13.4 25.2 10.6 23.9 L10.6 17.5 Q10.6 14.6 13.8 13.5 Z" fill="#fff"/><circle cx="11.9" cy="12.4" r="1.05" fill="#42526e"/><circle cx="20.1" cy="12.4" r="1.05" fill="#42526e"/><ellipse cx="16" cy="20.6" rx="2.5" ry="1.5" fill="#344563"/><rect x="15" y="23.4" width="2" height="1.1" fill="#344563"/></svg>
<div class="t" style="left:862px;top:720px;font-size:14px;line-height:14px;font-weight:400;color:#0052cc;-webkit-text-stroke:0.45px #0052cc;letter-spacing:0.3px">admin</div>
<div class="t" style="left:986px;top:720px;font-size:14px;line-height:14px;font-weight:400;color:#172b4d;letter-spacing:0px">6/26/2023</div>
<svg class="r" style="left:1118px;top:711px;" width="32" height="32" viewBox="0 0 32 32"><circle cx="16" cy="16" r="16" fill="#00b8d9"/><path d="M5.8 9.3 Q5.6 6.6 8.6 6.6 Q10.6 6.8 11.4 8.2 L9.4 12.6 Q6.2 12.2 5.8 9.3Z" fill="#ff8b00"/><path d="M26.2 9.3 Q26.4 6.6 23.4 6.6 Q21.4 6.8 20.6 8.2 L22.6 12.6 Q25.8 12.2 26.2 9.3Z" fill="#ff8b00"/><path d="M8.6 8 L23.4 8 L24.9 21.8 Q22.5 23.9 19.9 24.3 Q19.6 27.6 16 27.8 Q12.4 27.6 12.1 24.3 Q9.5 23.9 7.1 21.8 Z" fill="#ffab00"/><path d="M13.3 7.7 L18.7 7.7 L18.2 13.5 Q21.4 14.6 21.4 17.5 L21.4 23.9 Q18.6 25.2 16 25.2 Q13.4 25.2 10.6 23.9 L10.6 17.5 Q10.6 14.6 13.8 13.5 Z" fill="#fff"/><circle cx="11.9" cy="12.4" r="1.05" fill="#42526e"/><circle cx="20.1" cy="12.4" r="1.05" fill="#42526e"/><ellipse cx="16" cy="20.6" rx="2.5" ry="1.5" fill="#344563"/><rect x="15" y="23.4" width="2" height="1.1" fill="#344563"/></svg>
<div class="t" style="left:1172.5px;top:720px;font-size:14px;line-height:14px;font-weight:400;color:#0052cc;-webkit-text-stroke:0.45px #0052cc;letter-spacing:0.3px">admin</div>
<div class="t" style="left:1297px;top:720px;font-size:14px;line-height:14px;font-weight:400;color:#172b4d;letter-spacing:0px">6/26/2023</div>
<div class="r" style="left:1421px;top:719px;width:18px;height:16px;background:#0052cc;border-radius:8px"></div>
<div class="t" style="left:1426.5px;top:721.5px;font-size:12px;line-height:12px;font-weight:400;color:#fff;">0</div>
<div class="r" style="left:1503px;top:720px;width:10px;height:10px;border:2px solid #dfe1e6;border-radius:3px;background:#fafbfc"></div>
<div class="r" style="left:1583px;top:41px;width:1px;height:716px;background:#ededed;"></div>
<div class="r" style="left:0px;top:757px;width:1584px;height:1px;background:#1c1c1c;"></div>
<div class="r" style="left:0px;top:758px;width:1584px;height:1px;background:#282828;"></div>
<div class="r" style="left:588px;top:757px;width:48px;height:1px;background:#464646;"></div>
<div class="r" style="left:588px;top:758px;width:48px;height:1px;background:#565656;"></div>
</body></html>
